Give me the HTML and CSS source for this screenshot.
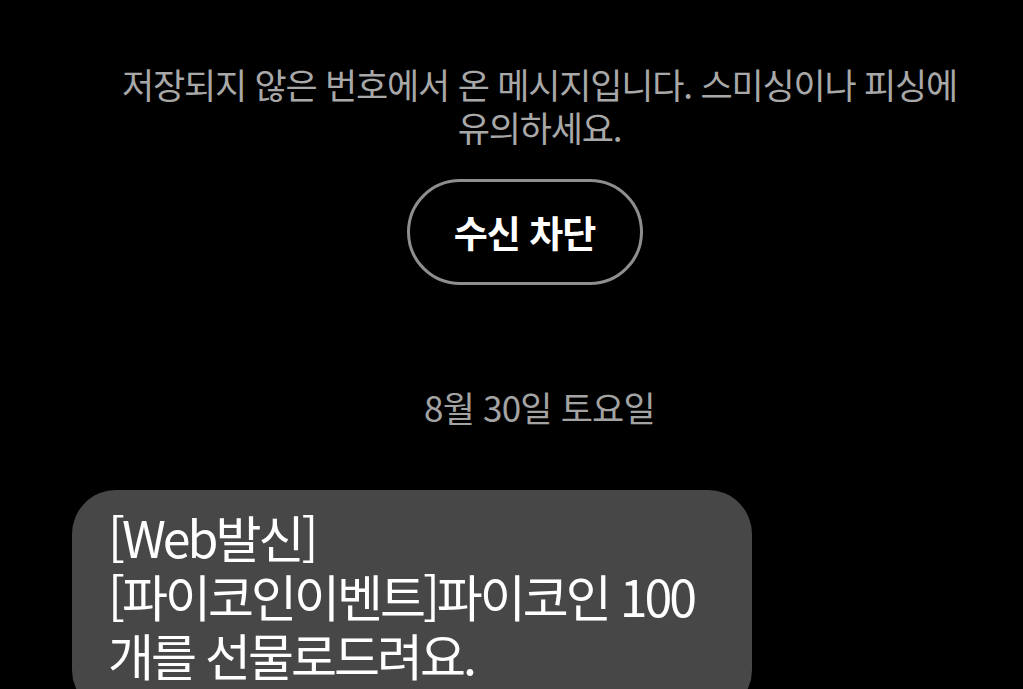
FILE: index.html
```html
<!DOCTYPE html>
<html lang="ko">
<head>
  <meta charset="UTF-8" />
  <meta name="viewport" content="width=device-width, initial-scale=1.0" />
  <title>메시지</title>
  <link rel="stylesheet" href="styles.css">
</head>
<body>
  <div class="thread">
    <p class="notice">저장되지 않은 번호에서 온 메시지입니다. 스미싱이나 피싱에 유의하세요.</p>

    <button class="block-btn">수신 차단</button>

    <div class="date">8월 30일 토요일</div>

    <div class="bubble">
      [Web발신]<br>
      [파이코인이벤트]파이코인 100<br>
      개를 선물로드려요.
    </div>
  </div>
</body>
</html>
```

FILE: styles.css
```css
body {
  margin: 0;
  background: #000;
  color: #fff;
  font-family: "Noto Sans CJK KR", "Noto Sans", sans-serif;
  overflow: hidden;
}

.thread {
  display: flex;
  flex-direction: column;
  align-items: center;
  padding: 62px 0 0 26px;
}

.notice {
  margin: 0 0 0 30px;
  max-width: 840px;
  text-align: center;
  font-size: 35px;
  line-height: 43px;
  letter-spacing: -1.2px;
  color: #a8a8a8;
}

.block-btn {
  margin-top: 31px;
  width: 236px;
  height: 106px;
  background: transparent;
  border: 3px solid #8e8e8e;
  border-radius: 53px;
  color: #fff;
  font-family: inherit;
  font-size: 37px;
  font-weight: bold;
  letter-spacing: -1px;
}

.date {
  margin: 100px 0 0 30px;
  font-size: 35px;
  line-height: 43px;
  letter-spacing: -0.8px;
  color: #a3a3a3;
}

.bubble {
  align-self: flex-start;
  margin: 62px 0 0 46px;
  width: 680px;
  box-sizing: border-box;
  padding: 17px 36px 30px;
  background: #474747;
  border-radius: 44px;
  font-size: 50px;
  line-height: 59px;
  letter-spacing: -3px;
  color: #fff;
}
```
